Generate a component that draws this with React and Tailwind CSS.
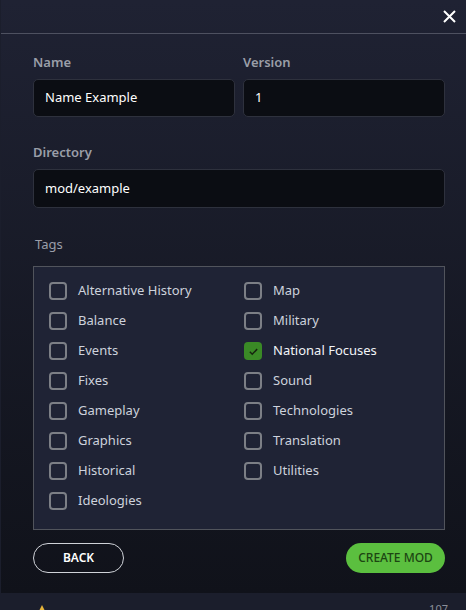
import React from 'react'

const leftTags = [
  'Alternative History',
  'Balance',
  'Events',
  'Fixes',
  'Gameplay',
  'Graphics',
  'Historical',
  'Ideologies',
]

const rightTags = [
  'Map',
  'Military',
  'National Focuses',
  'Sound',
  'Technologies',
  'Translation',
  'Utilities',
]

const checked = ['National Focuses']

const Tag = ({ label }) => {
  const on = checked.includes(label)
  return (
    <label className="flex items-center h-[30px] gap-[11px]">
      {on ? (
        <span className="w-[18px] h-[18px] rounded-[4px] bg-[#3a8a26] flex items-center justify-center">
          <svg width="11" height="11" viewBox="0 0 12 12" fill="none">
            <path d="M2 6.3l2.6 2.6L10 3.4" stroke="#16240f" strokeWidth="1.6" />
          </svg>
        </span>
      ) : (
        <span className="w-[18px] h-[18px] rounded-[4px] border-2 border-[#7c7f86]" />
      )}
      <span className={on ? 'text-[13px] text-[#f2f4f8]' : 'text-[13px] text-[#cdd2dc]'}>{label}</span>
    </label>
  )
}

const App = () => {
  return (
    <div className="w-[466px] h-[610px] bg-[#1b1e2c] overflow-hidden relative" style={{ fontFamily: '"Noto Sans", "Open Sans", sans-serif' }}>
      <div className="ml-[1px] h-[593px] bg-gradient-to-b from-[#1f2233] to-[#10121a] flex flex-col">
        {/* header */}
        <div className="h-[34px] border-b border-[#4e5160] flex justify-end items-center pr-[10px]">
          <svg width="13" height="13" viewBox="0 0 13 13">
            <path d="M1 1l11 11M12 1L1 12" stroke="#ffffff" strokeWidth="2" />
          </svg>
        </div>

        <div className="pl-[32px] pr-[21px]">
          <div className="flex gap-[8px] mt-[18px]">
            <div className="flex-1">
              <div className="text-[13px] font-semibold text-[#9a9ea8] h-[20px] leading-[20px]">Name</div>
              <div className="mt-[7px] h-[38px] rounded-[5px] border border-[#2e313d] bg-[#0b0d13] px-[11px] flex items-center text-[13px] text-white">
                Name Example
              </div>
            </div>
            <div className="flex-1">
              <div className="text-[13px] font-semibold text-[#9a9ea8] h-[20px] leading-[20px]">Version</div>
              <div className="mt-[7px] h-[38px] rounded-[5px] border border-[#2e313d] bg-[#0b0d13] px-[11px] flex items-center text-[13px] text-white">
                1
              </div>
            </div>
          </div>

          <div className="mt-[25px] text-[13px] font-semibold text-[#9a9ea8] h-[20px] leading-[20px]">Directory</div>
          <div className="mt-[7px] h-[39px] rounded-[5px] border border-[#2e313d] bg-[#0b0d13] px-[11px] flex items-center text-[13px] text-white">
            mod/example
          </div>

          <div className="mt-[26px] pl-[2px] text-[13px] text-[#9a9ea8] h-[20px] leading-[20px]">Tags</div>
          <div className="mt-[12px] h-[264px] border border-[#51545c] bg-[#1f2335] pl-[15px] pt-[9px] grid grid-cols-[195px_1fr]">
            <div className="flex flex-col">
              {leftTags.map((t) => (
                <Tag key={t} label={t} />
              ))}
            </div>
            <div className="flex flex-col">
              {rightTags.map((t) => (
                <Tag key={t} label={t} />
              ))}
            </div>
          </div>

          <div className="mt-[13px] flex justify-between">
            <button className="w-[91px] h-[30px] rounded-full border border-[#cfd2d8] text-[12px] font-semibold text-white">
              BACK
            </button>
            <button className="w-[99px] h-[30px] rounded-full bg-[#5bbf3f] text-[12px] font-medium text-[#1c4512]">
              CREATE MOD
            </button>
          </div>
        </div>
      </div>
      {/* page behind the modal */}
      <div className="flex justify-between items-start px-[38px] h-[17px]">
        <svg width="8" height="8" viewBox="0 0 8 8" className="mt-[12px]">
          <path d="M4 0L8 8H0z" fill="#e6b43a" />
        </svg>
        <span className="text-[11px] text-[#8b8f99] mt-[8px] mr-[-20px]">107</span>
      </div>
    </div>
  )
}

export default App
